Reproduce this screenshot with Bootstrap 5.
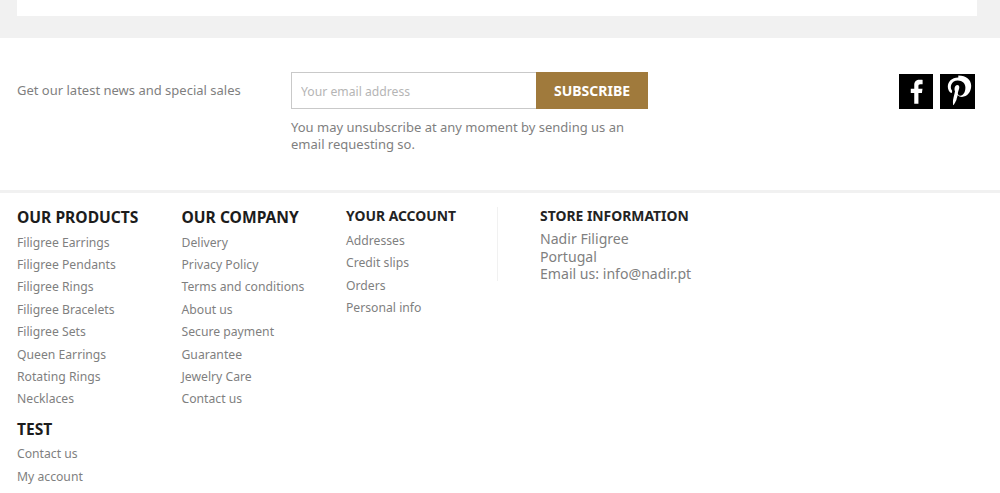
<!DOCTYPE html>
<html lang="en">
<head>
<meta charset="utf-8">
<title>Nadir Filigree</title>
<link href="https://cdn.jsdelivr.net/npm/bootstrap@5.3.0/dist/css/bootstrap.min.css" rel="stylesheet">
<style>
html,body{height:493px;overflow:hidden}
body{font-family:"Noto Sans",sans-serif;color:#7f7f7f;background:#fff;font-size:13px}
.top-band{background:#f1f1f1;height:38px;padding:0 23px 22px 17px}
.top-sheet{background:#fff;height:16px}
.news-zone{height:118px;padding:34px 25px 0 17px;border-bottom:3px solid #f1f1f1;box-sizing:content-box}
.news-label{width:274px;font-size:13px;line-height:18px;padding-top:9px;color:#7f7f7f}
.news-col{width:357px}
.news-input{height:37px;border:1px solid #c9c9c9;border-right:0;border-radius:0;font-size:12.2px;padding:1px 9px 0;color:#7f7f7f;box-shadow:none;flex:1 1 auto;width:1%}
.news-input::placeholder{color:#b5b5b5}
.news-btn{width:112px;height:37px;background:#a07a3c;color:#fff;border:0;border-radius:0;font-weight:700;font-size:14px;padding:0;line-height:37px}
.news-note{font-size:13px;line-height:17px;margin-top:10px;color:#7f7f7f}
.soc-wrap{gap:7px;padding-top:2px}
.soc{width:34px;height:35px;background:#000;display:block}
.soc + .soc{width:35px}
.foot-zone{padding:14px 0 0 17px}
.foot-col{width:164.5px}
.foot-h1{font-size:15.6px;line-height:20px;font-weight:700;color:#1c1c1c;margin:0 0 4.5px;text-transform:uppercase}
.foot-h2{font-size:13.9px;line-height:18px;font-weight:700;color:#232323;margin:0 0 5px;text-transform:uppercase}
.foot-list{list-style:none;padding:0;margin:0}
.foot-list li{line-height:22.4px;font-size:12.2px}
.foot-list a{color:#7f7f7f;text-decoration:none}
.foot-gap{margin-top:8px}
.acct-col{width:152px;border-right:1px solid #f1f1f1;height:74px}
.store-col{padding-left:42px}
.store-text{font-size:14.1px;line-height:17.5px;color:#7f7f7f;margin:0}
</style>
</head>
<body>
<div class="top-band"><div class="top-sheet"></div></div>
<section class="news-zone d-flex">
  <div class="news-label">Get our latest news and special sales</div>
  <div class="news-col">
    <form class="d-flex" onsubmit="return false">
      <input class="form-control news-input" type="email" placeholder="Your email address">
      <button class="btn news-btn" type="submit">SUBSCRIBE</button>
    </form>
    <p class="news-note mb-0">You may unsubscribe at any moment by sending us an email requesting so.</p>
  </div>
  <div class="ms-auto d-flex soc-wrap">
    <a class="soc" href="#" aria-label="Facebook"><svg width="34" height="35" viewBox="0 0 35 35"><path fill="#fff" d="M20 30v-11h3.600l.6-4.400H20v-2.600c0-1.200.3-2 2-2h2.300V5.600c-.4-.1-1.700-.2-3.200-.2-3.200 0-5.400 1.900-5.400 5.500v3.700h-3.600V19h3.600v11z"/></svg></a>
    <a class="soc" href="#" aria-label="Pinterest"><svg width="35" height="35" viewBox="0 0 35 35"><path fill="#fff" d="M18.300 3.500c-6.800 0-10.500 4.400-10.500 9.200 0 2.400 1.300 5.300 3.300 6.200.6.300.6 0 1-1.500.1-.5 0-.7-.3-1.100-2.300-3.100-.5-9.800 6-9.800 4.700 0 7.600 3 7.600 7.100 0 4.700-2.200 8.100-5.100 8.100-1.600 0-2.800-1.300-2.400-2.900.5-2 1.400-4.100 1.400-5.500 0-3.500-4.800-3-4.800 1.700 0 1.400.5 2.400.5 2.400s-1.500 6.600-1.800 7.900c-.5 2-.1 5.400 0 5.700.1.200.3.200.4.100.1-.2 2.400-3.600 3-5.900.2-.9 1.200-4.300 1.200-4.300.6 1.100 2.300 2 4.100 2 5.400 0 9.300-5 9.300-11.100 0-5.800-4.800-10.300-12.900-10.300z"/></svg></a>
  </div>
</section>
<section class="foot-zone d-flex">
  <div class="foot-col">
    <h2 class="foot-h1">Our products</h2>
    <ul class="foot-list">
      <li><a href="#">Filigree Earrings</a></li>
      <li><a href="#">Filigree Pendants</a></li>
      <li><a href="#">Filigree Rings</a></li>
      <li><a href="#">Filigree Bracelets</a></li>
      <li><a href="#">Filigree Sets</a></li>
      <li><a href="#">Queen Earrings</a></li>
      <li><a href="#">Rotating Rings</a></li>
      <li><a href="#">Necklaces</a></li>
    </ul>
    <h2 class="foot-h1 foot-gap">Test</h2>
    <ul class="foot-list">
      <li><a href="#">Contact us</a></li>
      <li><a href="#">My account</a></li>
    </ul>
  </div>
  <div class="foot-col">
    <h2 class="foot-h1">Our company</h2>
    <ul class="foot-list">
      <li><a href="#">Delivery</a></li>
      <li><a href="#">Privacy Policy</a></li>
      <li><a href="#">Terms and conditions</a></li>
      <li><a href="#">About us</a></li>
      <li><a href="#">Secure payment</a></li>
      <li><a href="#">Guarantee</a></li>
      <li><a href="#">Jewelry Care</a></li>
      <li><a href="#">Contact us</a></li>
    </ul>
  </div>
  <div class="acct-col">
    <h2 class="foot-h2">Your account</h2>
    <ul class="foot-list">
      <li><a href="#">Addresses</a></li>
      <li><a href="#">Credit slips</a></li>
      <li><a href="#">Orders</a></li>
      <li><a href="#">Personal info</a></li>
    </ul>
  </div>
  <div class="store-col">
    <h2 class="foot-h2">Store information</h2>
    <p class="store-text">Nadir Filigree<br>Portugal<br>Email us: info@nadir.pt</p>
  </div>
</section>
</body>
</html>
